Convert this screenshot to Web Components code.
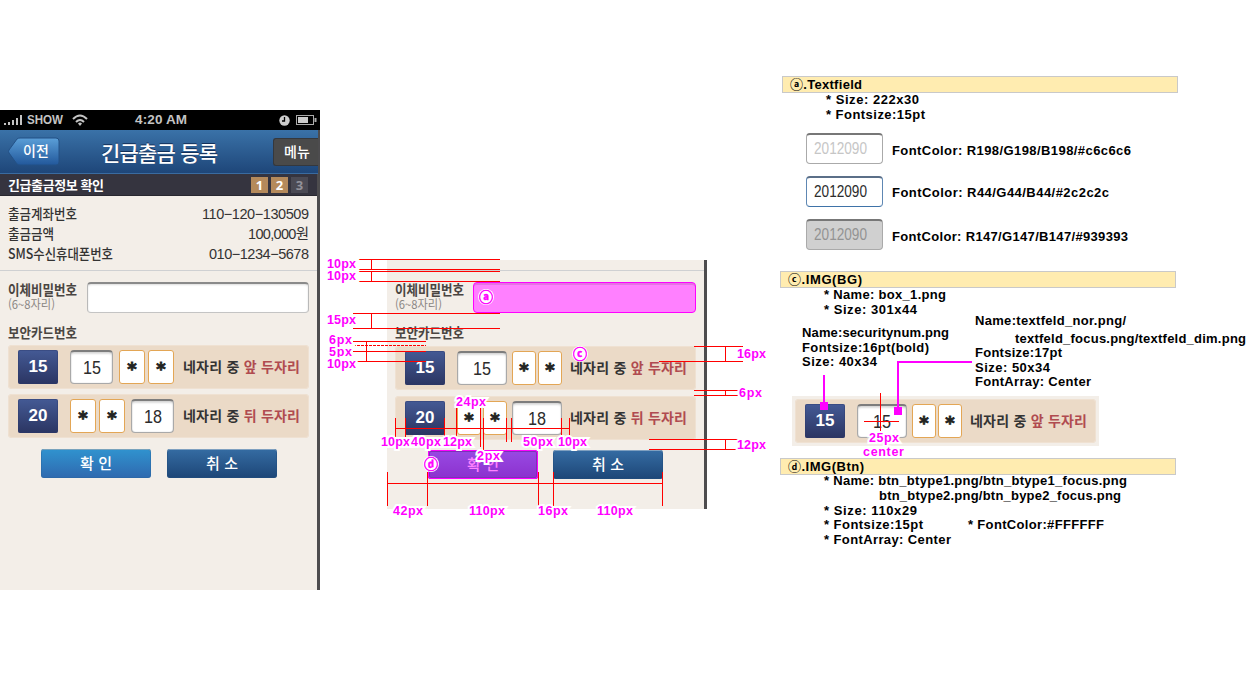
<!DOCTYPE html>
<html lang="ko">
<head>
<meta charset="utf-8">
<title>긴급출금 등록</title>
<style>
html,body{margin:0;background:#fff}
body{width:1250px;height:700px;overflow:hidden;position:relative;font-family:"Liberation Sans","Noto Sans CJK KR",sans-serif}
main{display:flex;align-items:flex-start;height:700px}
phone-screen{margin-top:110px}
screen-preview{margin:260px 0 0 67px}
spec-sheet{margin:76px 0 0 73px}
</style>
</head>
<body>
<main>
<phone-screen></phone-screen>
<screen-preview></screen-preview>
<spec-sheet></spec-sheet>
</main>
<measure-layer></measure-layer>
<script>
function define(name, html, setup) {
  customElements.define(name, class extends HTMLElement {
    connectedCallback() {
      if (this.shadowRoot) return;
      const root = this.attachShadow({ mode: "open" });
      const t = document.createElement("template");
      t.innerHTML = typeof html === "function" ? html(this) : html;
      root.append(t.content.cloneNode(true));
      if (setup) setup(this, root);
    }
  });
}

/* Rounded input box; kind: normal, wide, sample, focus, dim, star */
define("text-box", `
<style>
:host{display:flex;box-sizing:border-box;flex:none;width:50px;height:34px;align-items:center;justify-content:center;
 background:#fff;border:1px solid #a9a9a9;border-top:2px solid #7d7d7d;border-radius:4px;color:#2c2c2c;font:18px/20px "Liberation Sans",sans-serif;
 box-shadow:inset 0 2px 2px #0002,inset 0 0 1px #0005}
:host([kind=wide]){width:222px;height:31px;border-color:#8a8a8a #b9b9b9 #c4c4c4;box-shadow:inset 0 1px 2px #0002}
:host([kind=sample]),:host([kind=focus]),:host([kind=dim]){width:77px;height:31px;justify-content:flex-start;padding-left:7px;font-size:16px;line-height:18px;border-color:#777 #aaa #aaa;box-shadow:none}
:host([kind=sample]){color:#c6c6c6}
:host([kind=focus]){border-color:#5b6f88 #5e87b3 #3f73a8}
:host([kind=dim]){background:#d0d0d0;color:#939393}
:host([kind=star]){border:1px solid #e3a655;border-radius:3px;box-shadow:none;width:24px;color:#222}
:host([kind=star]) .v{display:block;font:bold 18px/20px "DejaVu Sans",sans-serif;height:20px;margin-top:4px;-webkit-text-stroke:.8px #222}
</style><span class="v"><slot></slot></span>`);

define("security-row", h => {
  const c = h.hasAttribute("compact"), back = h.hasAttribute("back");
  const box = `<text-box class="n"><fit-text w="18" squeeze>${h.getAttribute("value")}</fit-text></text-box>`;
  const stars = `<span class="s"><text-box kind="star">*</text-box><text-box kind="star">*</text-box></span>`;
  return `<style>
:host{display:flex;box-sizing:border-box;width:301px;height:44px;padding:0 0 0 10px;align-items:center;background:#ebdac7;border-radius:4px;box-shadow:inset 0 0 0 1px #efe1d2}
.b{width:40px;height:34px;border-radius:2px;background:linear-gradient(#445a95,#2b3562);color:#fff;font:bold 17px/34px "Liberation Sans";text-align:center;flex:none;box-shadow:inset 0 0 0 1px #2c396b66}
.f{display:flex;margin-left:12px;gap:${c ? 6 : 5}px}
.n{width:${c ? 43 : 50}px}
.s{display:flex;gap:${c ? 3 : 2}px}
.s text-box{width:${c ? 26 : 24}px}
.t{margin-left:${c ? 9 : 8}px;font:bold 14px/30px "Noto Sans CJK KR",sans-serif;color:#333;white-space:pre;margin-bottom:3px}
i{font-style:normal;color:#b04b50}
</style><span class="b"><fit-text w="19">${h.getAttribute("num")}</fit-text></span>
<span class="f">${back ? stars + box : box + stars}</span>
<span class="t"><fit-text w="117">네자리 중 <i>${back ? "뒤" : "앞"} 두자리</i></fit-text></span>`;
});

define("push-button", `
<style>
:host{display:block;width:110px;height:29px;border-radius:3px;text-align:center;color:#fff;
 font:500 15px/28px "Noto Sans CJK KR",sans-serif;background:linear-gradient(#356ca3,#1d4677);box-shadow:inset 0 1px #7fa0c0,inset 0 0 0 1px #214f7f88}
:host([primary]){background:linear-gradient(#3093cf,#2f69af);box-shadow:inset 0 1px #78a3bd,inset 0 0 0 1px #2867a077}
:host([marked]){background:linear-gradient(#994ae4,#8b31cd);color:#ff82ff;box-shadow:inset 0 0 0 1px #f0f,inset 0 0 0 2px #7d30b8}
</style><slot></slot>`);

define("transfer-form", h => {
  const c = h.hasAttribute("compact");
  return `<style>
:host{display:block;border-top:1px solid #cfd0d2;color:#4a4541;font-family:"Noto Sans CJK KR",sans-serif}
.row{display:flex;padding:11px 8px 0 8px;height:31px;justify-content:space-between}
.l{display:flex;flex-direction:column;font:bold 14px/15px "Noto Sans CJK KR",sans-serif}
.l small{font:12px/14px "Noto Sans CJK KR",sans-serif;color:#8b8784}
.k{font:bold 14px/20px "Noto Sans CJK KR",sans-serif;padding:9px 0 0 8px;height:${c ? 23 : 24}px}
.boxes{display:grid;gap:${c ? 5 : 6}px;margin-left:8px}
.btns{display:flex;gap:${c ? 16 : 15}px;margin:${c ? 11 : 10}px 0 0 41px}
.mark{background:#ff80ff;border:1px solid #f0f;border-top-width:1px;box-shadow:inset 0 2px #e373e3;width:223px}
</style>
<div class="row"><div class="l"><fit-text w="69" squeeze>이체비밀번호</fit-text><small><fit-text w="47" squeeze>(6~8자리)</fit-text></small></div>
<text-box kind="wide" ${c ? "" : 'class="mark"'}></text-box></div>
<div class="k"><fit-text w="69" squeeze>보안카드번호</fit-text></div>
<div class="boxes"><security-row num="15" value="15" ${c ? "compact" : ""}></security-row>
<security-row num="20" value="18" back ${c ? "compact" : ""}></security-row></div>
<div class="btns"><push-button primary ${c ? "" : "marked"}><fit-text w="32">확 인</fit-text></push-button><push-button><fit-text w="32">취 소</fit-text></push-button></div>`;
});

define("status-bar", `
<style>
:host{display:flex;height:20px;background:#000;color:#c4c4c4;align-items:center;font:bold 12.500px/20px "Liberation Sans",sans-serif}
.sig{margin-left:4px}.c{margin-left:4px}.w{margin-left:9px}.t{margin-left:47px}
.clk{margin-left:92px}.bat{margin-left:6px}
</style>
<svg class="sig" width="19" height="10" fill="#c4c4c4"><path d="M0 8h2v2H0zM4 7h2v3H4zM8 5h2v5H8zM12 3h2v7h-2zM16 0h2v10h-2z"/></svg>
<span class="c"><fit-text w="36" squeeze>SHOW</fit-text></span>
<svg class="w" width="16" height="12" fill="none" stroke="#c4c4c4" stroke-width="2"><path d="M1 5Q8-2 15 5M4 8Q8 4 12 8"/><path d="M6 9.500Q8 7.700 10 9.500L8 12z" fill="#c4c4c4" stroke="none"/></svg>
<span class="t"><fit-text w="52" style="font-size:13.500px">4:20 AM</fit-text></span>
<svg class="clk" width="11" height="11"><circle cx="5.500" cy="5.500" r="5.200" fill="#ccc"/><path d="M5.500 2v4H3" fill="none" stroke="#000" stroke-width="1.300"/></svg>
<svg class="bat" width="21" height="10"><rect x=".5" y=".5" width="17" height="9" fill="none" stroke="#aaa"/><path d="M2 2h10v6H2z" fill="#ccc"/><path d="M18.500 3h2v4h-2z" fill="#aaa"/></svg>`);

define("title-bar", `
<style>
:host{display:flex;box-sizing:border-box;height:44px;align-items:center;background:linear-gradient(#3a72a8,#1e4679);border-bottom:1px solid #3a6ba0;color:#fff;
 font:500 14px/28px "Noto Sans CJK KR",sans-serif;padding-left:8px}
.back{display:grid;width:52px;height:29px}
.back>*{grid-area:1/1}
.back span{padding-left:15px;line-height:26px}
.ti{font-size:21px;text-shadow:0 -1px #12305a;margin-left:41px}
.menu{margin-left:auto;width:45px;height:28px;background:#4a4a4a;border:1px solid #35383d;border-right:0;border-radius:3px 0 0 3px;box-sizing:border-box;line-height:24px;padding-left:10px}
</style>
<span class="back"><svg width="52" height="29"><defs><linearGradient id="g" x2="0" y2="1"><stop stop-color="#5b9fd8"/><stop offset="1" stop-color="#22589b"/></linearGradient></defs>
<path d="M9 2Q10 1 12 1H48Q51 1 51 4V25Q51 28 48 28H12Q10 28 9 27L1 16Q0 14.500 1 13Z" fill="url(#g)" stroke="#235186"/></svg><span><fit-text w="26">이전</fit-text></span></span>
<span class="ti"><fit-text w="117">긴급출금 등록</fit-text></span>
<span class="menu"><fit-text w="26">메뉴</fit-text></span>`);

define("step-bar", `
<style>
:host{display:flex;box-sizing:border-box;height:22px;background:#35343f;border-bottom:1px solid #28272f;align-items:center;justify-content:space-between;padding:0 9px 0 8px;color:#fff;font:bold 13px/21px "Noto Sans CJK KR",sans-serif}
div{display:flex;gap:3px}
b{width:17px;height:16px;background:#b58a5b;text-align:center;font:bold 13px/16px "Noto Sans",sans-serif}
b:last-child{background:#4b4a54;color:#92919a}
</style><fit-text w="96">긴급출금정보 확인</fit-text><div><b>1</b><b>2</b><b>3</b></div>`);

define("phone-screen", `
<style>
:host{display:block;width:320px;height:480px;flex:none}
.page{box-sizing:border-box;width:320px;height:460px;background:#f3eee8;border-right:3px solid #4d4c4e}
.info{padding:8px 8px 0;height:66px;color:#333;font:500 14px/18px "Noto Sans CJK KR",sans-serif}
.info div{display:flex;justify-content:space-between;height:20px}
.info span{font:14.500px/20px "Liberation Sans","Noto Sans CJK KR",sans-serif}
title-bar{margin-right:-1px}
</style>
<status-bar></status-bar>
<div class="page"><title-bar></title-bar><step-bar></step-bar>
<div class="info"><div><fit-text w="69" squeeze>출금계좌번호</fit-text><span><fit-text w="107">110−120−130509</fit-text></span></div>
<div><fit-text w="46" squeeze>출금금액</fit-text><span><fit-text w="61">100,000원</fit-text></span></div>
<div><fit-text w="105" squeeze>SMS수신휴대폰번호</fit-text><span><fit-text w="100">010−1234−5678</fit-text></span></div></div>
<transfer-form compact></transfer-form></div>`);

define("screen-preview", `
<style>:host{display:block;box-sizing:border-box;width:320px;height:249px;flex:none;background:#f3eee8;border-right:3px solid #4d4c4e;padding-top:10px}</style>
<transfer-form></transfer-form>`);

define("spec-heading", `
<style>:host{display:block;box-sizing:border-box;width:396px;height:17px;background:#ffecb0;border:1px solid #c9c9c9;padding-left:7px;font-size:13px;line-height:16px}</style><slot></slot>`);

define("spec-sheet", `
<style>
:host{display:block;width:470px;flex:none;font:bold 13px/14px "Liberation Sans","Noto Sans CJK KR",sans-serif;color:#000}
.first{margin-left:2px}
.li{padding-left:44px}
.li div{height:14.600px}
.fields{display:grid;gap:12px;margin:11px 0 0 26px}
.fields div{display:flex;align-items:center;gap:9px;height:31px}
.fields div>fit-text{padding-top:5px}
.fields div:nth-child(2)>fit-text{padding-top:2px}
.notes{display:grid;grid-template-columns:173px 1fr;margin:-3px 0 0 22px;height:82px}
.a{padding-top:12px}.a div{height:14.500px}
.b div{height:14.500px}.b .ind{margin:3px 0 0 40px}
.demo{width:307px;height:50px;background:#f3eee8;box-sizing:border-box;padding:3px;margin:0 0 12px 12px}
.two{display:flex;gap:45px}
</style>
<spec-heading class="first"><fit-text w="72">ⓐ.Textfield</fit-text></spec-heading>
<div class="li first"><div><fit-text w="93">* Size: 222x30</fit-text></div><div><fit-text w="99">* Fontsize:15pt</fit-text></div></div>
<div class="fields">
<div><text-box kind="sample"><fit-text w="53" squeeze>2012090</fit-text></text-box><fit-text w="239">FontColor: R198/G198/B198/#c6c6c6</fit-text></div>
<div><text-box kind="focus"><fit-text w="53" squeeze>2012090</fit-text></text-box><fit-text w="217">FontColor: R44/G44/B44/#2c2c2c</fit-text></div>
<div><text-box kind="dim"><fit-text w="53" squeeze>2012090</fit-text></text-box><fit-text w="236">FontColor: R147/G147/B147/#939393</fit-text></div>
</div>
<spec-heading style="margin-top:21px"><fit-text w="74">ⓒ.IMG(BG)</fit-text></spec-heading>
<div class="li"><div><fit-text w="122">* Name: box_1.png</fit-text></div><div><fit-text w="93">* Size: 301x44</fit-text></div></div>
<div class="notes">
<div class="a"><div><fit-text w="147">Name:securitynum.png</fit-text></div><div><fit-text w="127">Fontsize:16pt(bold)</fit-text></div><div><fit-text w="75">Size: 40x34</fit-text></div></div>
<div class="b"><div><fit-text w="151">Name:textfeld_nor.png/</fit-text></div><div class="ind"><fit-text w="231">textfeld_focus.png/textfeld_dim.png</fit-text></div><div><fit-text w="87">Fontsize:17pt</fit-text></div><div><fit-text w="75">Size: 50x34</fit-text></div><div><fit-text w="116">FontArray: Center</fit-text></div></div>
</div>
<div class="demo"><security-row num="15" value="15"></security-row></div>
<spec-heading><fit-text w="76">ⓓ.IMG(Btn)</fit-text></spec-heading>
<div class="li" style="margin-top:-1px"><div><fit-text w="303">* Name: btn_btype1.png/btn_btype1_focus.png</fit-text></div><div style="padding-left:55px"><fit-text w="242">btn_btype2.png/btn_bype2_focus.png</fit-text></div><div><fit-text w="93">* Size: 110x29</fit-text></div><div class="two"><fit-text w="99">* Fontsize:15pt</fit-text><fit-text w="136">* FontColor:#FFFFFF</fit-text></div><div><fit-text w="127">* FontArray: Center</fit-text></div></div>`);

/* Dimension labels: text, left edge, vertical centre, width */
const DIMS = [["10px",327,264,29],["10px",327,276,29],["15px",327,320,29],["6px",329,340,23],["5px",329,352,23],["10px",327,364,29],
["16px",737,354,29],["6px",739,393,23],["12px",737,445,29],["10px",381,442,29],["40px",411,442,30],["12px",443,442,29],["24px",456,402,30],
["2px",477,456,23],["50px",523,442,30],["10px",558,442,29],["42px",393,511,30],["110px",469,511,36],["16px",538,511,30],["110px",597,511,36],
["25px",869,438,30],["center",863,452,41]];
const PINS = [["ⓐ",486,297],["ⓒ",580,354],["ⓓ",431,464]];
define("measure-layer", () => `
<style>
:host{position:absolute;inset:0;display:block;pointer-events:none;color:#f0f;font:bold 12.500px/16px "Liberation Sans",sans-serif}
svg{position:absolute;left:0;top:0}
.d{position:absolute;white-space:pre;height:16px;-webkit-text-stroke:4px #fff;paint-order:stroke fill}
.p{position:absolute;width:16px;height:16px;border-radius:8px;background:#fff;font:bold 14px/14px "Noto Sans CJK KR",sans-serif;text-align:center;-webkit-text-stroke:.5px #f0f}
</style>
<svg width="1250" height="700" fill="none" stroke="#f00" shape-rendering="crispEdges"><path d="M353 259.500H500M353 269.500H500M353 271.500H500M353 281.500H500M353 313.500H500M353 328.500H500M353 341.500H426M353 351.500H426M357 361.500H426M371.500 259V269M371.500 271V281M371.500 313V328M366.500 341V361
M694 346.500H743M659 361.500H743M725.500 346V361M694 390.500H738M694 395.500H738M725.500 390V395M649 439.500H738M649 449.500H738M725.500 439V449
M395 428.500H570M395.500 418V437M405.500 418V437M444.500 418V437M456.500 408V440M480.500 408V447M483.500 418V450M506.500 418V442M511.500 418V442M561.500 418V435M569.500 418V435
M387 483.500H663M387.500 472V506M427.500 472V506M538.500 472V506M553.500 472V506M662.500 472V506M880.500 393V431M864 421.500H899"/>
<path d="M341 345.500H426" stroke-dasharray="3 1"/>
<path d="M824 375V404M972 362H898V411" stroke="#f0f" stroke-width="2"/><path d="M820 402h8v8h-8zM894 407h8v8h-8z" fill="#f0f" stroke="none"/></svg>
${DIMS.map(([t, x, y, w]) => `<span class="d" style="left:${x}px;top:${y - 8}px"><fit-text w="${w}">${t}</fit-text></span>`).join("")}
${PINS.map(([t, x, y]) => `<span class="p" style="left:${x - 8}px;top:${y - 8}px">${t}</span>`).join("")}`);

/* Text run that fills the width given in w: by tracking, or by condensing its glyphs when squeeze is set */
define("fit-text", `<style>:host{display:inline-block;white-space:pre;vertical-align:top}span{display:inline-block;transform-origin:0 50%}</style><span><slot></slot></span>`, (el, root) => {
  const s = root.querySelector("span"), n = [...el.textContent].length, w = +el.getAttribute("w");
  el.style.width = w + "px";
  const natural = s.getBoundingClientRect().width;
  if (el.hasAttribute("squeeze")) s.style.transform = `scaleX(${w / natural})`;
  else el.style.letterSpacing = (w - natural) / Math.max(1, n - 1) + "px";
});
</script>
</body>
</html>
